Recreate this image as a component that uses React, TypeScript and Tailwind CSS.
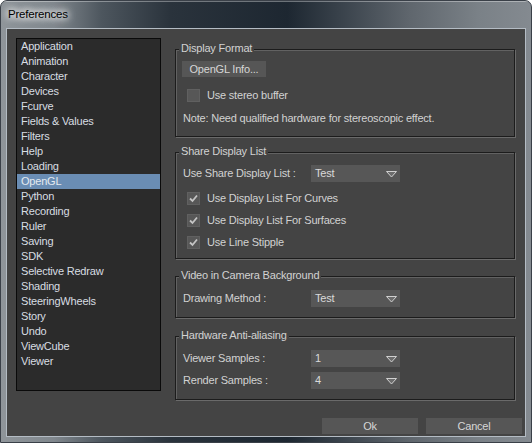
import type { ReactNode } from 'react';

const pages = [
  'Application',
  'Animation',
  'Character',
  'Devices',
  'Fcurve',
  'Fields & Values',
  'Filters',
  'Help',
  'Loading',
  'OpenGL',
  'Python',
  'Recording',
  'Ruler',
  'Saving',
  'SDK',
  'Selective Redraw',
  'Shading',
  'SteeringWheels',
  'Story',
  'Undo',
  'ViewCube',
  'Viewer',
];

function Group({ title, className, children }: { title: string; className: string; children: ReactNode }) {
  return (
    <div className={`relative w-[340px] border border-[#1c1c1c] shadow-[1px_1px_0_#6a6a6a,inset_1px_1px_0_#626262] ${className}`}>
      <span className="absolute -top-[9px] left-[3px] bg-[#444444] px-[2px] leading-[14px] text-[#d2d2d2]">{title}</span>
      {children}
    </div>
  );
}

function Select({ value }: { value: string }) {
  return (
    <div className="flex h-[17px] w-[89px] items-center justify-between bg-[#575757] pl-[4px] pr-[3px] text-[#dadada]">
      <span className="leading-[17px]">{value}</span>
      <svg width="11" height="7" viewBox="0 0 11 7" className="mt-[2px]">
        <path d="M0.5 0.5 H10.5 L5.5 6 Z" fill="#6c6c6c" stroke="#d0d0d0" strokeWidth="1" strokeLinejoin="round" />
      </svg>
    </div>
  );
}

function Field({ label, value, className = '' }: { label: string; value: string; className?: string }) {
  return (
    <div className={`flex items-center pl-[7px] ${className}`}>
      <span className="w-[128px] leading-[17px] text-[#d2d2d2]">{label}</span>
      <Select value={value} />
    </div>
  );
}

function Check({ label, checked }: { label: string; checked: boolean }) {
  return (
    <div className="flex h-[22px] items-center pl-[11px]">
      <span className="flex h-[13px] w-[13px] items-center justify-center border border-[#606060] bg-[#575757]">
        {checked && (
          <svg width="11" height="11" viewBox="0 0 11 11">
            <path d="M2 5.5 L4.5 8 L9 2.5" fill="none" stroke="#c4c4c4" strokeWidth="1.8" />
          </svg>
        )}
      </span>
      <span className="ml-[7px] leading-[14px] text-[#d2d2d2]">{label}</span>
    </div>
  );
}

function Button({ children, className }: { children: ReactNode; className: string }) {
  return (
    <div className={`flex h-[16px] items-center justify-center bg-[#565656] leading-[16px] text-[#d6d6d6] ${className}`}>
      {children}
    </div>
  );
}

export default function App() {
  return (
    <div className="flex h-[443px] w-[532px] flex-col overflow-hidden rounded-t-[7px] border border-[#3a4048] bg-[linear-gradient(to_right,#8f959a_0%,#80878d_10%,#4d565e_19%,#2a333c_32%,#1d2731_54%,#39424b_64%,#5f666d_77%,#7a8187_90%,#848a90_100%)] font-['Liberation_Sans',Arial,sans-serif] text-[11px] tracking-[-0.2px]">
      <div className="flex h-[27px] shrink-0 items-center pl-[7px] shadow-[inset_0_1px_0_rgba(255,255,255,0.35)]">
        <span className="text-[11.5px] text-black [text-shadow:0_0_10px_#ffffff,0_0_8px_#ffffff,0_0_6px_#ffffff]">
          Preferences
        </span>
      </div>
      <div className="mx-[5px] mb-[5px] flex h-[409px] flex-col border border-[#b4bcc4] bg-[#444444]">
        <div className="flex pl-[9px] pt-[9px]">
          <div className="h-[353px] w-[145px] border border-[#0a0a0a] bg-[#2b2b2b]">
            {pages.map((p) => (
              <div
                key={p}
                className={`h-[15px] pl-[4px] leading-[15px] ${p === 'OpenGL' ? 'bg-[#6a8db4] text-[#e4eaf0]' : 'text-[#d8dde2]'}`}
              >
                {p}
              </div>
            ))}
          </div>
          <div className="ml-[14px] flex flex-col">
            <Group title="Display Format" className="mt-[11px] h-[88px]">
              <div className="pl-[6px] pt-[11px]">
                <Button className="w-[84px]">OpenGL Info...</Button>
              </div>
              <div className="mt-[7px]">
                <Check label="Use stereo buffer" checked={false} />
              </div>
              <div className="mt-[5px] pl-[7px] leading-[14px] text-[#d2d2d2]">
                Note: Need qualified hardware for stereoscopic effect.
              </div>
            </Group>
            <Group title="Share Display List" className="mt-[15px] h-[107px]">
              <Field label="Use Share Display List :" value="Test" className="pt-[12px]" />
              <div className="mt-[5px]">
                <Check label="Use Display List For Curves" checked />
                <Check label="Use Display List For Surfaces" checked />
                <Check label="Use Line Stipple" checked />
              </div>
            </Group>
            <Group title="Video in Camera Background" className="mt-[17px] h-[42px]">
              <Field label="Drawing Method :" value="Test" className="pt-[13px]" />
            </Group>
            <Group title="Hardware Anti-aliasing" className="mt-[18px] h-[64px]">
              <Field label="Viewer Samples :" value="1" className="pt-[13px]" />
              <Field label="Render Samples :" value="4" className="mt-[5px]" />
            </Group>
          </div>
        </div>
        <div className="mt-auto flex justify-end gap-[8px] pb-[2px] pr-[3px]">
          <Button className="w-[96px]">Ok</Button>
          <Button className="w-[96px]">Cancel</Button>
        </div>
      </div>
    </div>
  );
}
